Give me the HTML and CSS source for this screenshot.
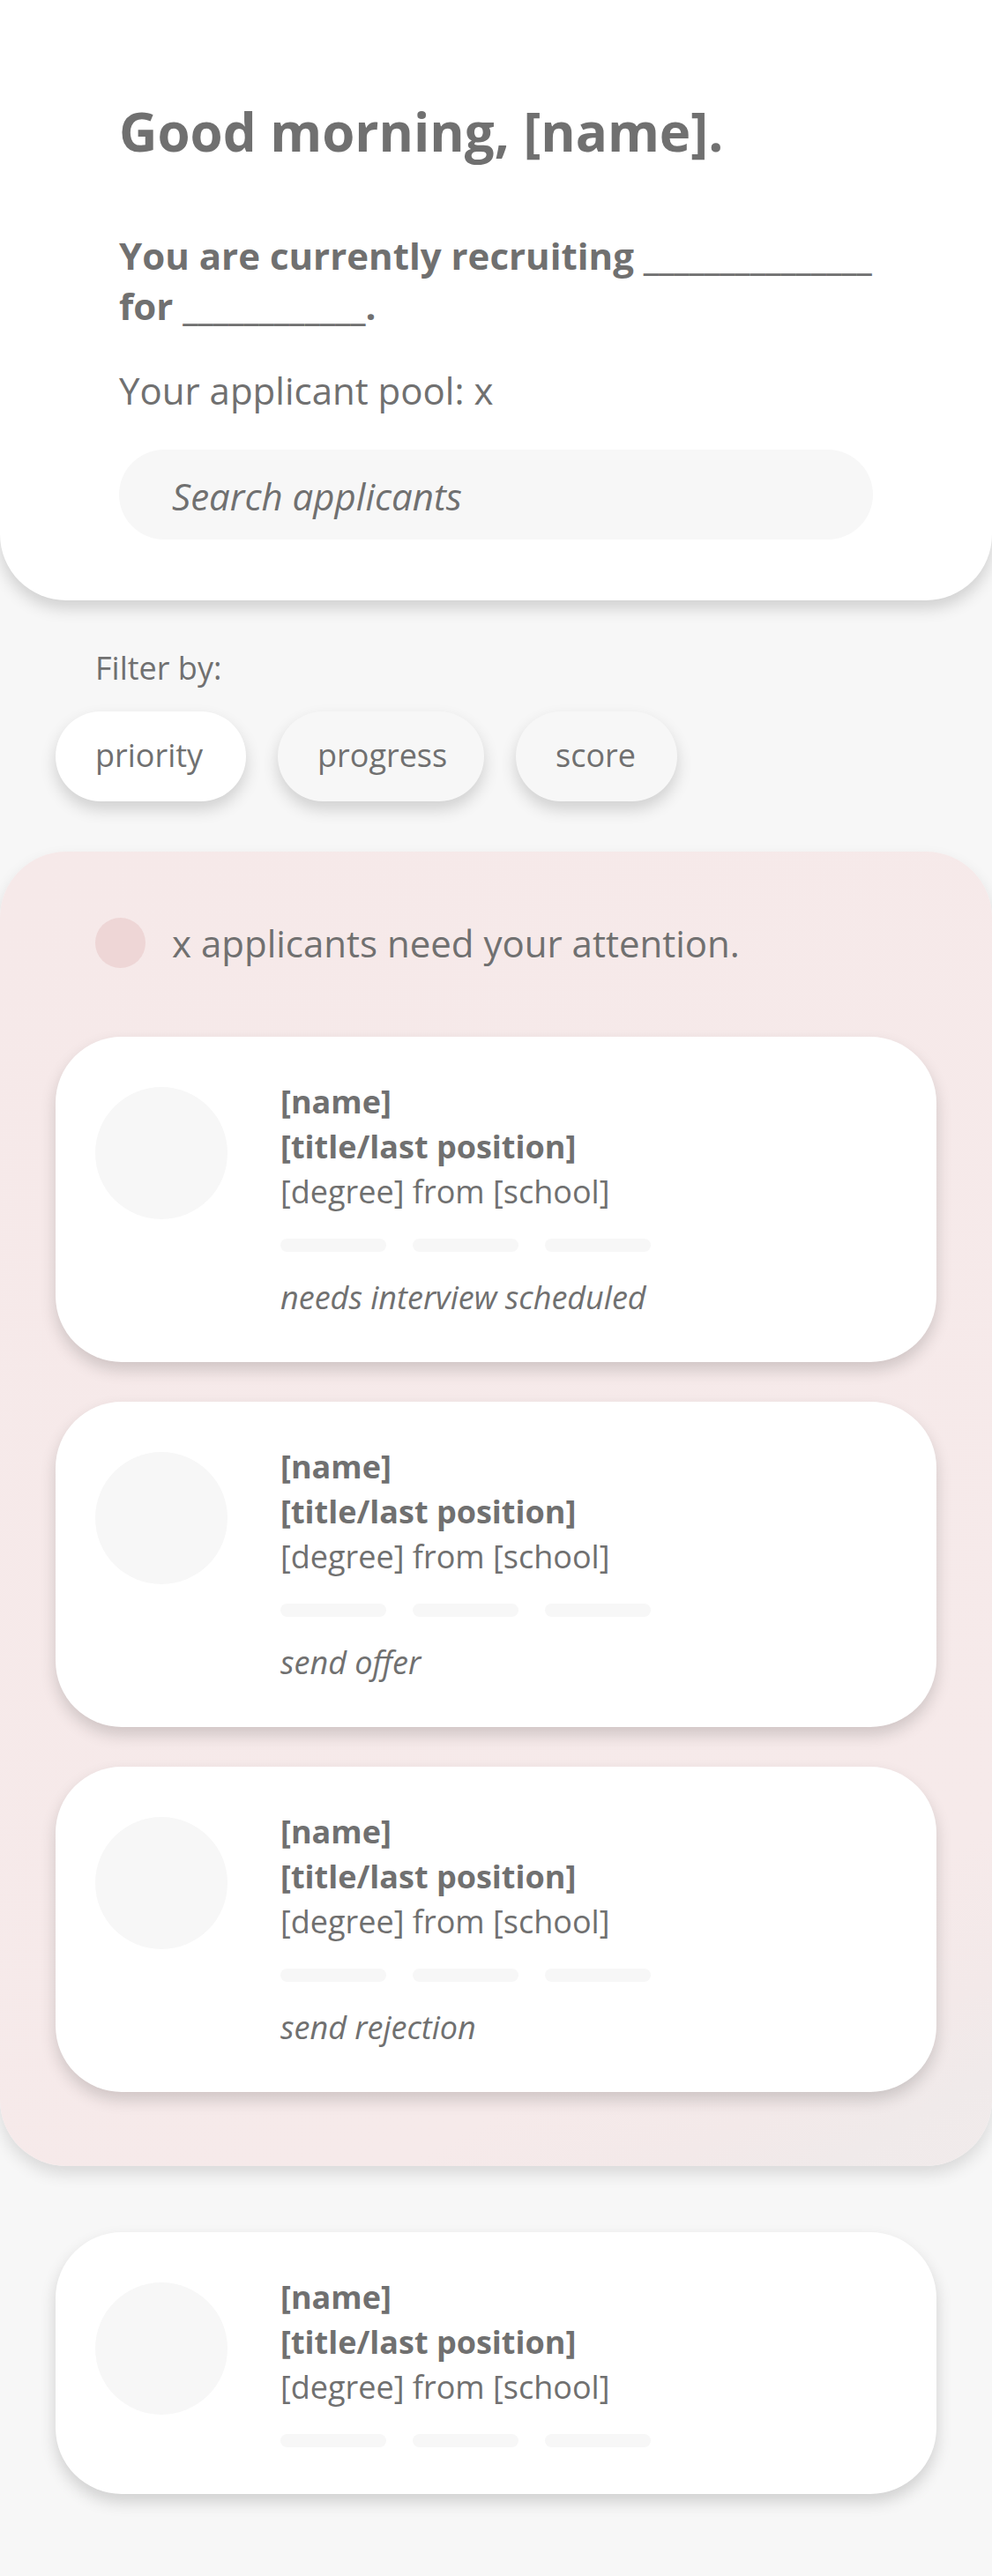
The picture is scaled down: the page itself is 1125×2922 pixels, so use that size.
FILE: index.html
```html
<!DOCTYPE html>
<html lang="en">
<head>
<meta charset="utf-8">
<meta name="viewport" content="width=device-width, initial-scale=1">
<title>Applicants</title>
<link rel="stylesheet" href="styles.css">
</head>
<body>
<header class="header">
  <h1 class="greeting">Good morning, [name].</h1>
  <p class="role">You are currently recruiting _______________ for ____________.</p>
  <p class="pool">Your applicant pool: x</p>
  <input class="search" type="search" placeholder="Search applicants" aria-label="Search applicants">
</header>
<main>
  <section class="filters" aria-labelledby="filter-label">
    <p class="filter-label" id="filter-label">Filter by:</p>
    <div class="chips">
      <button class="chip chip-active" type="button" aria-pressed="true">priority</button>
      <button class="chip" type="button" aria-pressed="false">progress</button>
      <button class="chip" type="button" aria-pressed="false">score</button>
    </div>
  </section>
  <section class="attention">
    <h2 class="attention-title"><span class="dot"></span>x applicants need your attention.</h2>
    <div class="cards">
      <article class="card">
        <div class="avatar"></div>
        <div class="details">
          <h3 class="name">[name]</h3>
          <p class="position">[title/last position]</p>
          <p>[degree] from [school]</p>
          <div class="steps"><span class="step"></span><span class="step"></span><span class="step"></span></div>
          <p class="status">needs interview scheduled</p>
        </div>
      </article>
      <article class="card">
        <div class="avatar"></div>
        <div class="details">
          <h3 class="name">[name]</h3>
          <p class="position">[title/last position]</p>
          <p>[degree] from [school]</p>
          <div class="steps"><span class="step"></span><span class="step"></span><span class="step"></span></div>
          <p class="status">send offer</p>
        </div>
      </article>
      <article class="card">
        <div class="avatar"></div>
        <div class="details">
          <h3 class="name">[name]</h3>
          <p class="position">[title/last position]</p>
          <p>[degree] from [school]</p>
          <div class="steps"><span class="step"></span><span class="step"></span><span class="step"></span></div>
          <p class="status">send rejection</p>
        </div>
      </article>
    </div>
  </section>
  <section class="others">
    <article class="card">
      <div class="avatar"></div>
      <div class="details">
        <h3 class="name">[name]</h3>
        <p class="position">[title/last position]</p>
        <p>[degree] from [school]</p>
        <div class="steps"><span class="step"></span><span class="step"></span><span class="step"></span></div>
      </div>
    </article>
  </section>
</main>
</body>
</html>
```
FILE: styles.css
```css
:root {
  --text: #707070;
  --surface: #f7f7f7;
  --shadow: 0 9px 18px rgba(0, 0, 0, 0.16);
}

* {
  box-sizing: border-box;
}

body {
  margin: 0;
  background: var(--surface);
  color: var(--text);
  font: 36px/51px "Open Sans", "Noto Sans", sans-serif;
}

h1,
h2,
h3,
p {
  margin: 0;
}

.header {
  padding: 108px 135px 69px;
  background: #fff;
  border-radius: 0 0 75px 75px;
  box-shadow: var(--shadow);
  font-size: 42px;
  line-height: 57px;
}

.greeting {
  margin-bottom: 71px;
  font-size: 60px;
  line-height: 82px;
  font-weight: 700;
}

.role {
  margin-bottom: 39px;
  font-weight: 700;
}

.pool {
  margin-bottom: 39px;
}

.search {
  display: block;
  width: 100%;
  height: 102px;
  padding: 2px 60px 0;
  border: 0;
  border-radius: 51px;
  background: var(--surface);
  color: var(--text);
  font: inherit;
  font-style: italic;
  appearance: none;
}

.search::placeholder {
  color: var(--text);
  opacity: 1;
}

.filters {
  padding: 51px 63px 57px;
}

.filter-label {
  margin: 0 45px 24px;
}

.chips {
  display: grid;
  grid-template-columns: 216px 234px 183px;
  gap: 36px;
}

.chip {
  height: 102px;
  padding: 0 0 4px 45px;
  border: 0;
  border-radius: 51px;
  background: var(--surface);
  box-shadow: var(--shadow);
  color: inherit;
  font: inherit;
  text-align: left;
}

.chip-active {
  background: #fff;
}

.attention {
  padding: 75px 63px 84px;
  border-radius: 75px;
  background: linear-gradient(150deg, #f6e9e9 0%, #f6eaea 82%, #f3e9e9 90%, #f0eaea 95%, #f1ebeb 100%);
  box-shadow: 0 9px 18px rgba(0, 0, 0, 0.12);
}

.attention-title {
  display: flex;
  align-items: center;
  gap: 30px;
  margin: 0 45px 78px;
  font-size: 42px;
  line-height: 57px;
  font-weight: 400;
}

.dot {
  flex: none;
  width: 57px;
  height: 57px;
  border-radius: 50%;
  background: #eed6d6;
}

.cards {
  display: grid;
  gap: 45px;
}

.card {
  display: flex;
  gap: 60px;
  padding: 48px 45px;
  border-radius: 75px;
  background: #fff;
  box-shadow: var(--shadow);
}

.avatar {
  flex: none;
  width: 150px;
  height: 150px;
  margin-top: 9px;
  border-radius: 50%;
  background: var(--surface);
}

.name,
.position {
  font-size: 36px;
  font-weight: 700;
}

.steps {
  display: flex;
  gap: 30px;
  margin-top: 28px;
}

.step {
  width: 120px;
  height: 15px;
  border-radius: 8px;
  background: var(--surface);
}

.status {
  margin-top: 26px;
  font-style: italic;
}

.others {
  padding: 75px 63px 93px;
}

.others .card {
  padding-bottom: 53px;
}
```
